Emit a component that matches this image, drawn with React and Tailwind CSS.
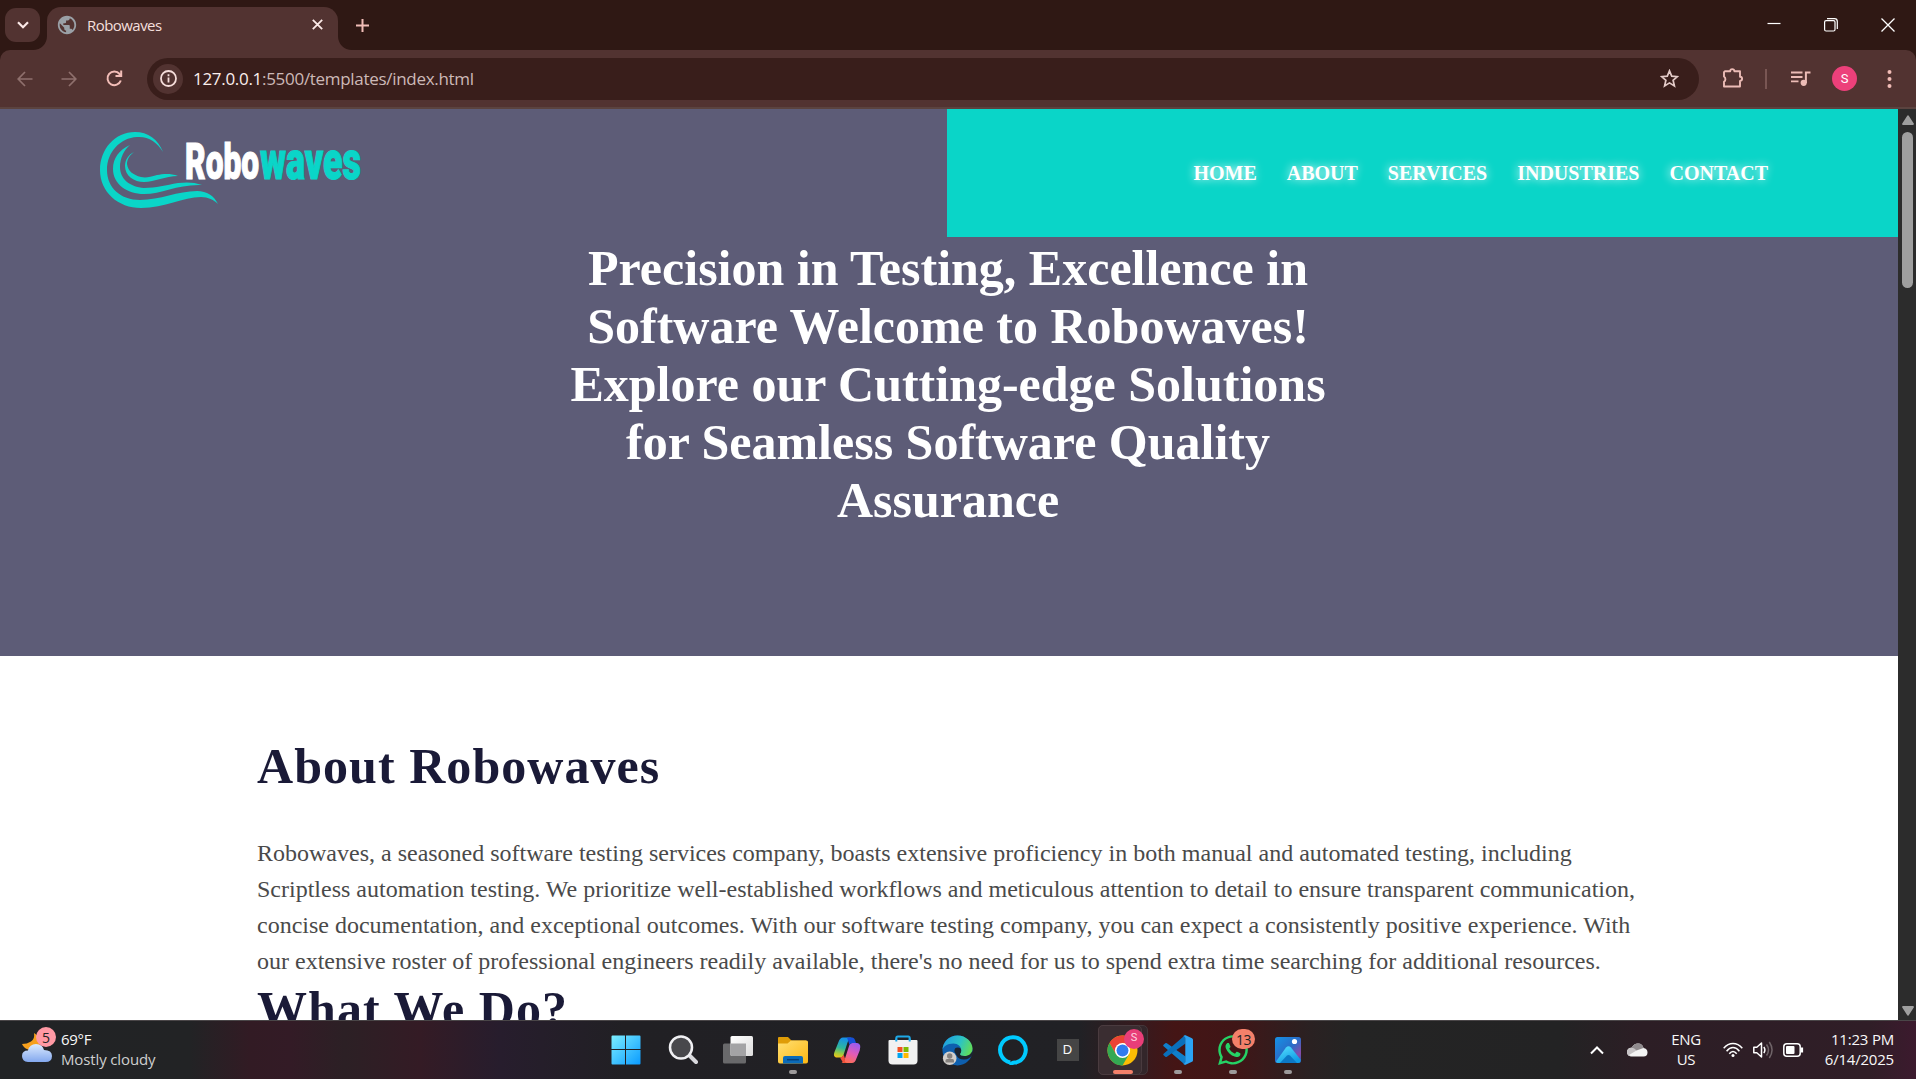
import React from "react";
import { FaWhatsapp } from "react-icons/fa";
import { MdQueueMusic, MdPublic } from "react-icons/md";

const UI = "font-['Open_Sans','Noto_Sans',sans-serif]";

function TabStrip() {
  return (
    <div className="flex h-[50px] shrink-0 items-start bg-[#2f1814] text-[#f4dfdc]">
      <div className="ml-[5px] mt-2 flex h-[34px] w-[35px] items-center justify-center rounded-[11px] bg-[#523331]">
        <svg width="12" height="8" viewBox="0 0 12 8" fill="none" stroke="#fbe9e7" strokeWidth="2.2"><path d="M1 1.2l5 5 5-5" /></svg>
      </div>
      <div className="relative ml-[7px] mt-[7px] flex h-[43px] w-[291px] items-center rounded-t-[14px] bg-[#523331] pb-4 pl-[11px] pr-[15px] pt-[4px]">
        <svg className="absolute -left-[14px] bottom-0" width="14" height="14"><path d="M14 0V14H0C8 14 14 8 14 0Z" fill="#523331" /></svg>
        <svg className="absolute -right-[14px] bottom-0" width="14" height="14"><path d="M0 0V14H14C6 14 0 8 0 0Z" fill="#523331" /></svg>
        <MdPublic size={22} color="#9aa0a6" className="-ml-[2px] mt-1" />
        <span className={`${UI} ml-[9px] mt-1 text-[15px] leading-5 tracking-[-0.55px]`}>Robowaves</span>
        <svg className="ml-auto mt-1" width="11" height="11" viewBox="0 0 11 11" stroke="#fbe9e7" strokeWidth="1.8"><path d="M.8.8l9.4 9.4M10.2.8L.8 10.2" /></svg>
      </div>
      <svg className="ml-[18px] mt-[19px]" width="13" height="13" viewBox="0 0 13 13" stroke="#f2bdb7" strokeWidth="2"><path d="M6.5 0v13M0 6.5h13" /></svg>
      <div className="ml-auto mr-[21px] mt-[18px] flex items-center gap-[43px]">
        <svg width="14" height="14" viewBox="0 0 14 14"><path d="M.5 5.500h13" stroke="#fff" strokeWidth="1.2" /></svg>
        <svg width="14" height="14" viewBox="0 0 14 14" fill="none" stroke="#fff" strokeWidth="1.2"><rect x=".6" y="2.600" width="10.400" height="10.400" rx="1.500" /><path d="M3 .7h7.500a2.800 2.800 0 0 1 2.800 2.800v7.500" /></svg>
        <svg width="14" height="14" viewBox="0 0 14 14" stroke="#fff" strokeWidth="1.3"><path d="M.5.5l13 13M13.500.5l-13 13" /></svg>
      </div>
    </div>
  );
}

function Toolbar() {
  return (
    <div className="flex h-[59px] shrink-0 bg-[#2f1814]">
      <div className="flex w-full items-center rounded-t-[10px] border-b-2 border-[#5b433f] bg-[#523331]">
        <svg className="ml-[17px]" width="16" height="16" viewBox="0 0 16 16" fill="none" stroke="#8f706d" strokeWidth="1.700"><path d="M15.500 8H1.500M8 1L1.200 8L8 15" /></svg>
        <svg className="ml-[28px]" width="16" height="16" viewBox="0 0 16 16" fill="none" stroke="#8f706d" strokeWidth="1.700"><path d="M.5 8h14M8 1l6.800 7L8 15" /></svg>
        <svg className="ml-[29px]" width="17" height="17" viewBox="0 0 17 17" fill="none" stroke="#f2bdb7" strokeWidth="2"><path d="M14.800 10.500A6.800 6.800 0 1 1 13.600 4L15 5.500" /><path d="M15.200.5V6H9.500" /></svg>
        <div className="ml-[24px] flex h-[42px] w-[1552px] items-center rounded-full bg-[#391e1b]">
          <div className="ml-[6px] flex size-[30px] items-center justify-center rounded-full bg-[#523331]">
            <svg width="17" height="17" viewBox="0 0 17 17" fill="none" stroke="#f6dedb" strokeWidth="1.800"><circle cx="8.500" cy="8.500" r="7.500" /><path d="M8.500 7.500v5M8.500 4.300v2" /></svg>
          </div>
          <span className={`${UI} ml-[10px] mt-px text-[17px] leading-6 tracking-[-0.3px] text-[#cdb9b7]`}><span className="text-[#fbeeec]">127.0.0.1</span>:5500/templates/index.html</span>
          <svg className="ml-auto mr-[20px]" width="19" height="19" viewBox="0 0 19 19" fill="none" stroke="#e3cbc8" strokeWidth="1.700"><path d="M9.500 1.800l2.200 5.300 5.700.5-4.300 3.700 1.300 5.600-4.900-3-4.900 3 1.300-5.600L1.600 7.600l5.700-.5z" /></svg>
        </div>
        <svg className="ml-[23px]" width="23" height="23" viewBox="0 0 23 23"><path d="M3 4.200h5.200a2.100 2.100 0 0 1 4.200 0h5.600v5.500a2.100 2.100 0 0 1 0 4.200v5.600H2v-4.700a3.200 3.200 0 0 0 0-5.300V5.200z" fill="none" stroke="#ecbcb6" strokeWidth="1.900" strokeLinejoin="round" /></svg>
        <div className="ml-[20px] h-5 w-[2px] bg-[#795653]" />
        <svg className="ml-[24px]" width="20" height="16" viewBox="0 0 20 16"><path d="M0 1.500h11.500M0 6h11.500M0 10.400h7.500" stroke="#ecbcb6" strokeWidth="1.900" /><circle cx="12.700" cy="11.800" r="3.100" fill="#ecbcb6" /><path d="M14.900 12V1.500h4.600" stroke="#ecbcb6" strokeWidth="2" fill="none" /></svg>
        <div className="ml-[21px] flex size-[25px] items-center justify-center rounded-full bg-[#ec407a] font-['Roboto',sans-serif] text-[13px] text-white">S</div>
        <svg className="ml-[30px]" width="5" height="18" viewBox="0 0 5 18" fill="#f2bdb7"><circle cx="2.500" cy="2" r="2" /><circle cx="2.500" cy="9" r="2" /><circle cx="2.500" cy="16" r="2" /></svg>
      </div>
    </div>
  );
}

function Logo() {
  return (
    <svg className="ml-[100px] shrink-0" width="270" height="110" viewBox="100 109 270 110">
      <g fill="#0ad5c8">
        <path d="M163 152C158 139 148 132 135 132C115 132 100 149 100 170C100 192 118 208 141 208C165 208 183 197 201 197C208 197 214 200 218 204C214 196 207 191 197 191C178 191 160 200 140 200C121 200 107 188 107 170C107 152 120 138 137 137C148 136 157 142 163 152Z" />
        <path d="M130 145C119 150 113 158 113 169C113 184 127 194 144 194C162 194 178 184 202 185C194 182 186 182 178 183C166 185 156 188 144 188C130 187 120 179 120 167C120 158 124 150 130 145Z" />
        <path d="M134 152C128 155 125 160 125 166C125 176 134 182 144 182C155 182 165 176 178 176C170 173 163 174 157 175C150 177 146 178 141 177C133 175 128 171 127 164C127 159 130 155 134 152Z" />
      </g>
      <g fontFamily="Roboto, sans-serif" fontWeight="900" strokeWidth="1.2">
        <text x="185" y="179" textLength="74" lengthAdjust="spacingAndGlyphs" fontSize="50" fill="#fff" stroke="#fff">Robo</text>
        <text x="260" y="179" textLength="101" lengthAdjust="spacingAndGlyphs" fontSize="53" fill="#0ad5c8" stroke="#0ad5c8">waves</text>
      </g>
    </svg>
  );
}

function Hero() {
  return (
    <header className="h-[547px] bg-[#5d5c77] text-white">
      <div className="flex h-[128px] justify-between">
        <Logo />
        <nav className="flex w-[951px] justify-end bg-[#0ad5c8] pr-[130px] pt-[53px] text-[20px] font-bold leading-[23px] [text-shadow:0_0_10px_#fff]">
          <div className="flex gap-[30px]">
            {["HOME", "ABOUT", "SERVICES", "INDUSTRIES", "CONTACT"].map((t) => (
              <a key={t}>{t}</a>
            ))}
          </div>
        </nav>
      </div>
      <h1 className="ml-[548px] mt-[2px] w-[800px] text-center text-[50px] font-bold leading-[58px]">
        Precision in Testing, Excellence in<br />
        Software Welcome to Robowaves!<br />
        Explore our Cutting-edge Solutions<br />
        for Seamless Software Quality<br />
        Assurance
      </h1>
    </header>
  );
}

function About() {
  return (
    <section className="whitespace-nowrap pl-[257px] pt-[81px]">
      <h2 className="text-[50px] font-bold leading-[58px] tracking-[1.05px] text-[#1a1a37]">About Robowaves</h2>
      <p className="mt-[40px] text-[24px] leading-9 text-[#4a4a4a]">
        Robowaves, a seasoned software testing services company, boasts extensive proficiency in both manual and automated testing, including<br />
        Scriptless automation testing. We prioritize well-established workflows and meticulous attention to detail to ensure transparent communication,<br />
        concise documentation, and exceptional outcomes. With our software testing company, you can expect a consistently positive experience. With<br />
        our extensive roster of professional engineers readily available, there's no need for us to spend extra time searching for additional resources.
      </p>
      <h2 className="mt-px text-[50px] font-bold leading-[58px] tracking-[1.1px] text-[#1a1a37]">What We Do?</h2>
    </section>
  );
}

function Scrollbar() {
  return (
    <div className="flex w-[18px] shrink-0 flex-col items-center bg-[#2c2c2c]">
      <svg className="ml-[1px] mt-[6px] shrink-0" width="12" height="10" viewBox="0 0 12 10"><path d="M6 1.200L11 9H1Z" fill="#9f9f9f" stroke="#9f9f9f" strokeWidth="1.800" strokeLinejoin="round" /></svg>
      <div className="ml-[1px] mt-[7px] h-[156px] w-[11px] rounded-full bg-[#9f9f9f]" />
      <svg className="mb-[4px] ml-[1px] mt-auto shrink-0" width="12" height="10" viewBox="0 0 12 10"><path d="M6 8.800L11 1H1Z" fill="#9f9f9f" stroke="#9f9f9f" strokeWidth="1.800" strokeLinejoin="round" /></svg>
    </div>
  );
}

const Start = () => (
  <svg width="30" height="30" viewBox="0 0 30 30">
    <defs><linearGradient id="win" x1="0" y1="0" x2="1" y2="1"><stop offset="0" stopColor="#7ceeff" /><stop offset="1" stopColor="#0a9bff" /></linearGradient></defs>
    <path d="M1.500 .5H14V14H.5V1.500Q.5.5 1.500.5ZM15 .5h13.500q1 0 1 1V14H15ZM.5 15H14v14.500H1.500q-1 0-1-1ZM15 15h14.500v13.500q0 1-1 1H15Z" fill="url(#win)" />
  </svg>
);
const Search = () => (
  <svg width="30" height="30" viewBox="0 0 30 30" fill="none">
    <path d="M21 20l7 7" stroke="#d9d9dd" strokeWidth="4" strokeLinecap="round" />
    <circle cx="13" cy="12.500" r="11" fill="#48484c" stroke="#f0f0f3" strokeWidth="2.500" />
  </svg>
);
const TaskView = () => (
  <svg width="32" height="30" viewBox="0 0 32 30">
    <defs><linearGradient id="tv" x1="0" y1="0" x2="1" y2="1"><stop offset="0" stopColor="#fff" /><stop offset="1" stopColor="#dcdcdc" /></linearGradient></defs>
    <rect x="1" y="8.500" width="23" height="20" rx="1.500" fill="#69696b" />
    <rect x="8.500" y="1" width="22.500" height="20" rx="1.500" fill="url(#tv)" />
    <path d="M8.500 8.500H24V21H10q-1.500 0-1.500-1.500Z" fill="#a3a3a5" />
  </svg>
);
const Folder = () => (
  <svg width="30" height="28" viewBox="0 0 30 28">
    <defs><linearGradient id="fo" x1="0" y1="0" x2="1" y2="1"><stop offset="0" stopColor="#ffdf72" /><stop offset="1" stopColor="#fdb813" /></linearGradient></defs>
    <path d="M0 2Q0 1 1 1h9l3.500 3.500H28V12H0Z" fill="#df9c07" />
    <path d="M0 7.500h9.500L13 4.500h15.500q1.500 0 1.500 1.500v19.500q0 2-2 2H2q-2 0-2-2Z" fill="url(#fo)" />
    <path d="M5 27.500v-5.500q0-2 2-2h16q2 0 2 2v5.500Z" fill="#0b6bb8" />
    <path d="M9 23.700h12" stroke="#063f78" strokeWidth="1.500" />
  </svg>
);
const Copilot = () => (
  <svg width="30" height="28" viewBox="0 0 30 28">
    <defs>
      <linearGradient id="c1" x1=".4" y1="0" x2=".2" y2="1"><stop offset="0" stopColor="#1590e8" /><stop offset=".5" stopColor="#2fb79b" /><stop offset=".8" stopColor="#a5cb3b" /><stop offset="1" stopColor="#f3c316" /></linearGradient>
      <linearGradient id="c2" x1=".7" y1="0" x2=".3" y2="1"><stop offset="0" stopColor="#9a5cf0" /><stop offset=".5" stopColor="#e25bb8" /><stop offset="1" stopColor="#ff6f4e" /></linearGradient>
    </defs>
    <path d="M12 27h7q3 0 4.200-4l3.500-8.500q2-7-2.500-7.500h-5q-2.400 0-3.300 3.500L11.500 24q-.8 2-3 2.500 2 .5 3.500 .5Z" fill="url(#c2)" />
    <path d="M18.500 1.500H10Q7 1.500 5.500 6l-4 10q-2 5.500 3 5.500h3q2.500 0 3.500-4l3.500-11q.8-3 4-5Z" fill="url(#c1)" />
    <path d="M14 1.500h5q2.500 0 3.500 4l.5 1.500h-3.500q-2 0-3 2Z" fill="#1650d8" />
    <path d="M7 21.500q2.500 0 3.500-3l1.500 4q-1 4 2 4.500h-2q-2.500 0-3.500-3Z" fill="#f0503a" />
  </svg>
);
const Store = () => (
  <svg width="30" height="30" viewBox="0 0 30 30">
    <path d="M8.300 6.500V3q0-1.500 1.500-1.500h10.400q1.500 0 1.500 1.500v3.500" fill="none" stroke="#1ea9e8" strokeWidth="2" />
    <path d="M.5 6q0-1 1-1h27q1 0 1 1v19.500q0 4-4 4h-21q-4 0-4-4Z" fill="#f1f1f1" />
    <path d="M8.300 6.500V3.500M21.700 6.500V3.500" stroke="#1ea9e8" strokeWidth="2" />
    <path d="M9.500 12h5v5h-5Z" fill="#f25022" /><path d="M15.500 12h5v5h-5Z" fill="#7fba00" />
    <path d="M9.500 18h5v5h-5Z" fill="#00a4ef" /><path d="M15.500 18h5v5h-5Z" fill="#ffb900" />
  </svg>
);
const Edge = () => (
  <svg width="31" height="31" viewBox="0 0 31 31">
    <defs>
      <linearGradient id="e1" x1="0" y1=".3" x2="1" y2=".6"><stop offset="0" stopColor="#1f9de0" /><stop offset=".55" stopColor="#2cc3c4" /><stop offset="1" stopColor="#62dd55" /></linearGradient>
    </defs>
    <circle cx="15.500" cy="15.500" r="15" fill="#0e5fae" />
    <path d="M14 13c-2 5 1 12 8.500 11.500 3 0 6-2 8.500-5v-3l-9 4Z" fill="#1b2430" />
    <path d="M.5 15.500C.5 7 7 .5 15.500.5S30.500 7 30.500 13.500c0 5-4 7.500-8 7.500-3 0-4.500-1-4.500-2 0-.8 1.200-1.500 1.200-4 0-3.500-3.200-6.500-7.700-6.500C5 8.500.5 12 .5 15.500Z" fill="url(#e1)" />
    <circle cx="15.800" cy="15.800" r="3.400" fill="#1b2430" />
    <circle cx="7.700" cy="23.200" r="6.800" fill="#d2cfcc" />
    <circle cx="7.700" cy="21" r="2.700" fill="#85817e" /><path d="M3.500 27.500v-2q0-1.500 1.500-1.500h5.500q1.500 0 1.500 1.500v2Z" fill="#85817e" />
  </svg>
);
const Alexa = () => (
  <svg width="30" height="30" viewBox="0 0 30 30"><path d="M12.300 27.500A12.800 12.800 0 1 1 17 27.600Q13.300 27.500 13.300 30" fill="none" stroke="#00caff" strokeWidth="4" /></svg>
);
const Chrome = () => (
  <svg width="31" height="31" viewBox="-15.500 -15.500 31 31">
    <circle r="15" fill="#fbbc04" />
    <path d="M-13 -7.500A15 15 0 0 1 13 -7.500H0L-6.500 3.700Z" fill="#ea4335" />
    <path d="M-13 -7.500A15 15 0 0 0 0 15L6.500 3.700L-6.500 3.700Z" fill="#34a853" />
    <circle r="7.600" fill="#fff" /><circle r="6" fill="#2f7bee" />
  </svg>
);
const VsCode = () => (
  <svg width="30" height="30" viewBox="0 0 30 30">
    <path d="M.6 9.800l1.700-1.600q.8-.6 1.600 0L22.500 21.500V29.700Q21.500 29.500 20.500 28.500L.6 11.300q-.8-.8 0-1.500Z" fill="#0f7fcb" />
    <path d="M.6 20.200l1.700 1.600q.8.600 1.600 0L22.500 8.500V.3Q21.500.5 20.500 1.500L.6 18.700q-.8.800 0 1.500Z" fill="#0a6fba" />
    <path d="M22.500.3L29 3.200q1 .5 1 1.600V25.200q0 1.100-1 1.600L22.500 29.700q-1.200.3-2.500-1.200 2 .6 2.300-1.500V3q-.3-2.100-2.300-1.500Q21.300 0 22.500.3Z" fill="#2ba3f3" />
  </svg>
);
const Photos = () => (
  <svg width="26" height="26" viewBox="0 0 26 26">
    <defs>
      <linearGradient id="ph" x1="0" y1="0" x2="1" y2="1"><stop offset="0" stopColor="#1593e6" /><stop offset=".5" stopColor="#2a6cc8" /><stop offset=".8" stopColor="#8a4aa8" /><stop offset="1" stopColor="#1d63b8" /></linearGradient>
      <linearGradient id="ph2" x1="0" y1="0" x2=".6" y2="1"><stop offset="0" stopColor="#5be3ff" /><stop offset="1" stopColor="#0f9be6" /></linearGradient>
    </defs>
    <rect width="26" height="26" rx="2.500" fill="url(#ph)" />
    <path d="M1 24.500L11 10.500q2.500-2.500 5 0L25.500 22.500V23.500q0 2.500-2.500 2.500H3Q1.500 26 1 24.500Z" fill="url(#ph2)" />
    <path d="M5 26L12 18.500q1.500-1.200 3 0L22 26Z" fill="#0c78c6" />
    <circle cx="19.500" cy="4.500" r="2.600" fill="#fff" />
  </svg>
);

function Slot({ children, dot }) {
  return (
    <div className="relative flex w-[55px] items-center justify-center">
      {children}
      {dot && <div className="absolute bottom-[5px] left-[23.500px] h-1 w-2 rounded-full bg-[#9d9a9b]" />}
    </div>
  );
}

function Taskbar() {
  return (
    <div className={`${UI} flex h-[59px] shrink-0 border-t border-[#4a4648] bg-[linear-gradient(90deg,#212325_0px,#222325_190px,#321b24_250px,#331b26_290px,#2c2025_345px,#341b25_420px,#271d2d_500px,#212024_625px,#212125_1080px,#371a1e_1140px,#441515_1175px,#401617_1235px,#2a2122_1310px,#242424_1350px,#232324_1560px,#2c1e25_1640px,#301e27_1870px,#3c1a2e_1916px)] text-[#f8f8f8]`}>
      <div className="flex w-[598px] pl-[21px]">
        <div className="relative mt-[6px] size-[34px]">
          <svg width="34" height="36" viewBox="0 0 34 36">
            <defs><linearGradient id="cl" x1="0" y1="0" x2="0" y2="1"><stop offset="0" stopColor="#dcebff" /><stop offset="1" stopColor="#83a8ee" /></linearGradient></defs>
            <path d="M13 6q1 6-3 8.500T1 17q2 5 8 6 8 1 10-6 1-7-6-11Z" fill="#f6a01d" />
            <path d="M7 35q-6-.5-6-6t6-5.500q1.500-6.500 8-6.500t8 6q8 0 8 6t-6.500 6Z" fill="url(#cl)" />
          </svg>
          <div className="absolute top-0 left-[15px] flex size-5 items-center justify-center rounded-full bg-[#ff99a4] text-[14px] text-[#222]">5</div>
        </div>
        <div className="ml-[6px] mt-[8px] text-[15px] leading-5">
          <div className="tracking-[-0.3px]">69°F</div>
          <div className="tracking-[-0.13px] text-[#cfcfcf]">Mostly cloudy</div>
        </div>
      </div>
      <div className="flex">
        <Slot><Start /></Slot>
        <div className="w-[2px]" />
        <Slot><Search /></Slot>
        <Slot><TaskView /></Slot>
        <Slot dot><Folder /></Slot>
        <Slot><Copilot /></Slot>
        <Slot><Store /></Slot>
        <Slot><Edge /></Slot>
        <Slot><Alexa /></Slot>
        <Slot><div className="flex size-[22px] items-center justify-center bg-[#454545] font-['Liberation_Sans',sans-serif] text-[13px]">D</div></Slot>
        <Slot>
          <div className="absolute left-[3px] top-[4px] h-[50px] w-[50px] rounded-[5px] border border-[#443539] bg-[#33262a]" />
          <div className="absolute left-[3px] top-[4px] h-[50px] w-[44px] rounded-[5px] border border-[#4a3b3f] bg-[#3a2d31]" />
          <div className="relative"><Chrome />
            <div className="absolute -top-[6px] left-[17px] flex size-5 items-center justify-center rounded-full bg-[#e83e78] font-['Roboto',sans-serif] text-[11px] text-[#ffd5e0]">S</div>
          </div>
          <div className="absolute bottom-[5px] left-[18px] h-1 w-5 rounded-full bg-[#f4806a]" />
        </Slot>
        <Slot dot><VsCode /></Slot>
        <Slot dot>
          <FaWhatsapp size={34} color="#25d366" />
          <div className="absolute left-[27px] top-[8px] flex h-5 w-[23px] items-center justify-center rounded-full bg-[#f4806a] text-[14px] tracking-[-.5px] text-[#222]">13</div>
        </Slot>
        <Slot dot><Photos /></Slot>
      </div>
      <div className="ml-auto flex items-center pr-[22px] text-[15px] leading-5">
        <svg width="14" height="9" viewBox="0 0 14 9" fill="none" stroke="#fff" strokeWidth="2"><path d="M1 7.500l6-6 6 6" /></svg>
        <svg className="ml-[23px]" width="21" height="14" viewBox="0 0 21 14"><path d="M4.500 13.500Q0 13 0 9t4.500-4.200Q7 .5 11 .5q4.500 0 5.500 4.500 4 .5 4 4.500t-4 4Z" fill="#f4f4f4" /><path d="M4.500 4.800Q7 .5 11 .5q4.500 0 5.500 4.500L9.500 7.500Z" fill="#8f8a8d" /><path d="M4.500 13.500Q0 13 0 9q0-4 4.500-4.200 3 0 5 2.700L2 12Z" fill="#c6c3c5" /></svg>
        <div className="-mt-[2px] ml-[23px] w-[30px] text-center tracking-[-0.3px]">ENG<br />US</div>
        <svg className="ml-[22px]" width="20" height="16" viewBox="0 0 20 16" fill="none" stroke="#fff" strokeWidth="1.500"><path d="M.7 6.200Q4.800 1.500 10 1.500t9.300 4.700M3.600 9.200Q6.500 5.500 10 5.500t6.400 3.700M6.300 11.800Q8 9.500 10 9.500t3.700 2.300" /><circle cx="10" cy="13.500" r="1.500" fill="#fff" stroke="none" /></svg>
        <svg className="ml-[10px]" width="20" height="18" viewBox="0 0 20 18" fill="none" stroke="#fff" strokeWidth="1.500"><path d="M.8 6.200h3L8.500 2v14L3.800 11.800h-3Z" strokeLinejoin="round" /><path d="M10.800 6q2.200 3 0 6" /><path d="M13.500 3.500q4 5.500 0 11M16.300 1q5.500 8 0 16" stroke="#6f6468" /></svg>
        <svg className="ml-[10px]" width="21" height="14" viewBox="0 0 21 14" fill="none" stroke="#fff" strokeWidth="1.500"><rect x=".8" y=".8" width="16.400" height="12.400" rx="3" /><rect x="3" y="3" width="8.500" height="8" rx="1" fill="#fff" stroke="none" /><path d="M19 4.500v5" strokeWidth="2.200" /></svg>
        <div className="-mt-[2px] w-[90px] text-right tracking-[-0.2px]">11:23 PM<br />6/14/2025</div>
      </div>
    </div>
  );
}

export default function App() {
  return (
    <div className="flex h-[1079px] w-[1916px] flex-col overflow-hidden bg-white">
      <TabStrip />
      <Toolbar />
      <div className="flex h-[911px] shrink-0">
        <main className="w-[1898px] overflow-hidden bg-white font-['Liberation_Serif',serif]">
          <Hero />
          <About />
        </main>
        <Scrollbar />
      </div>
      <Taskbar />
    </div>
  );
}
